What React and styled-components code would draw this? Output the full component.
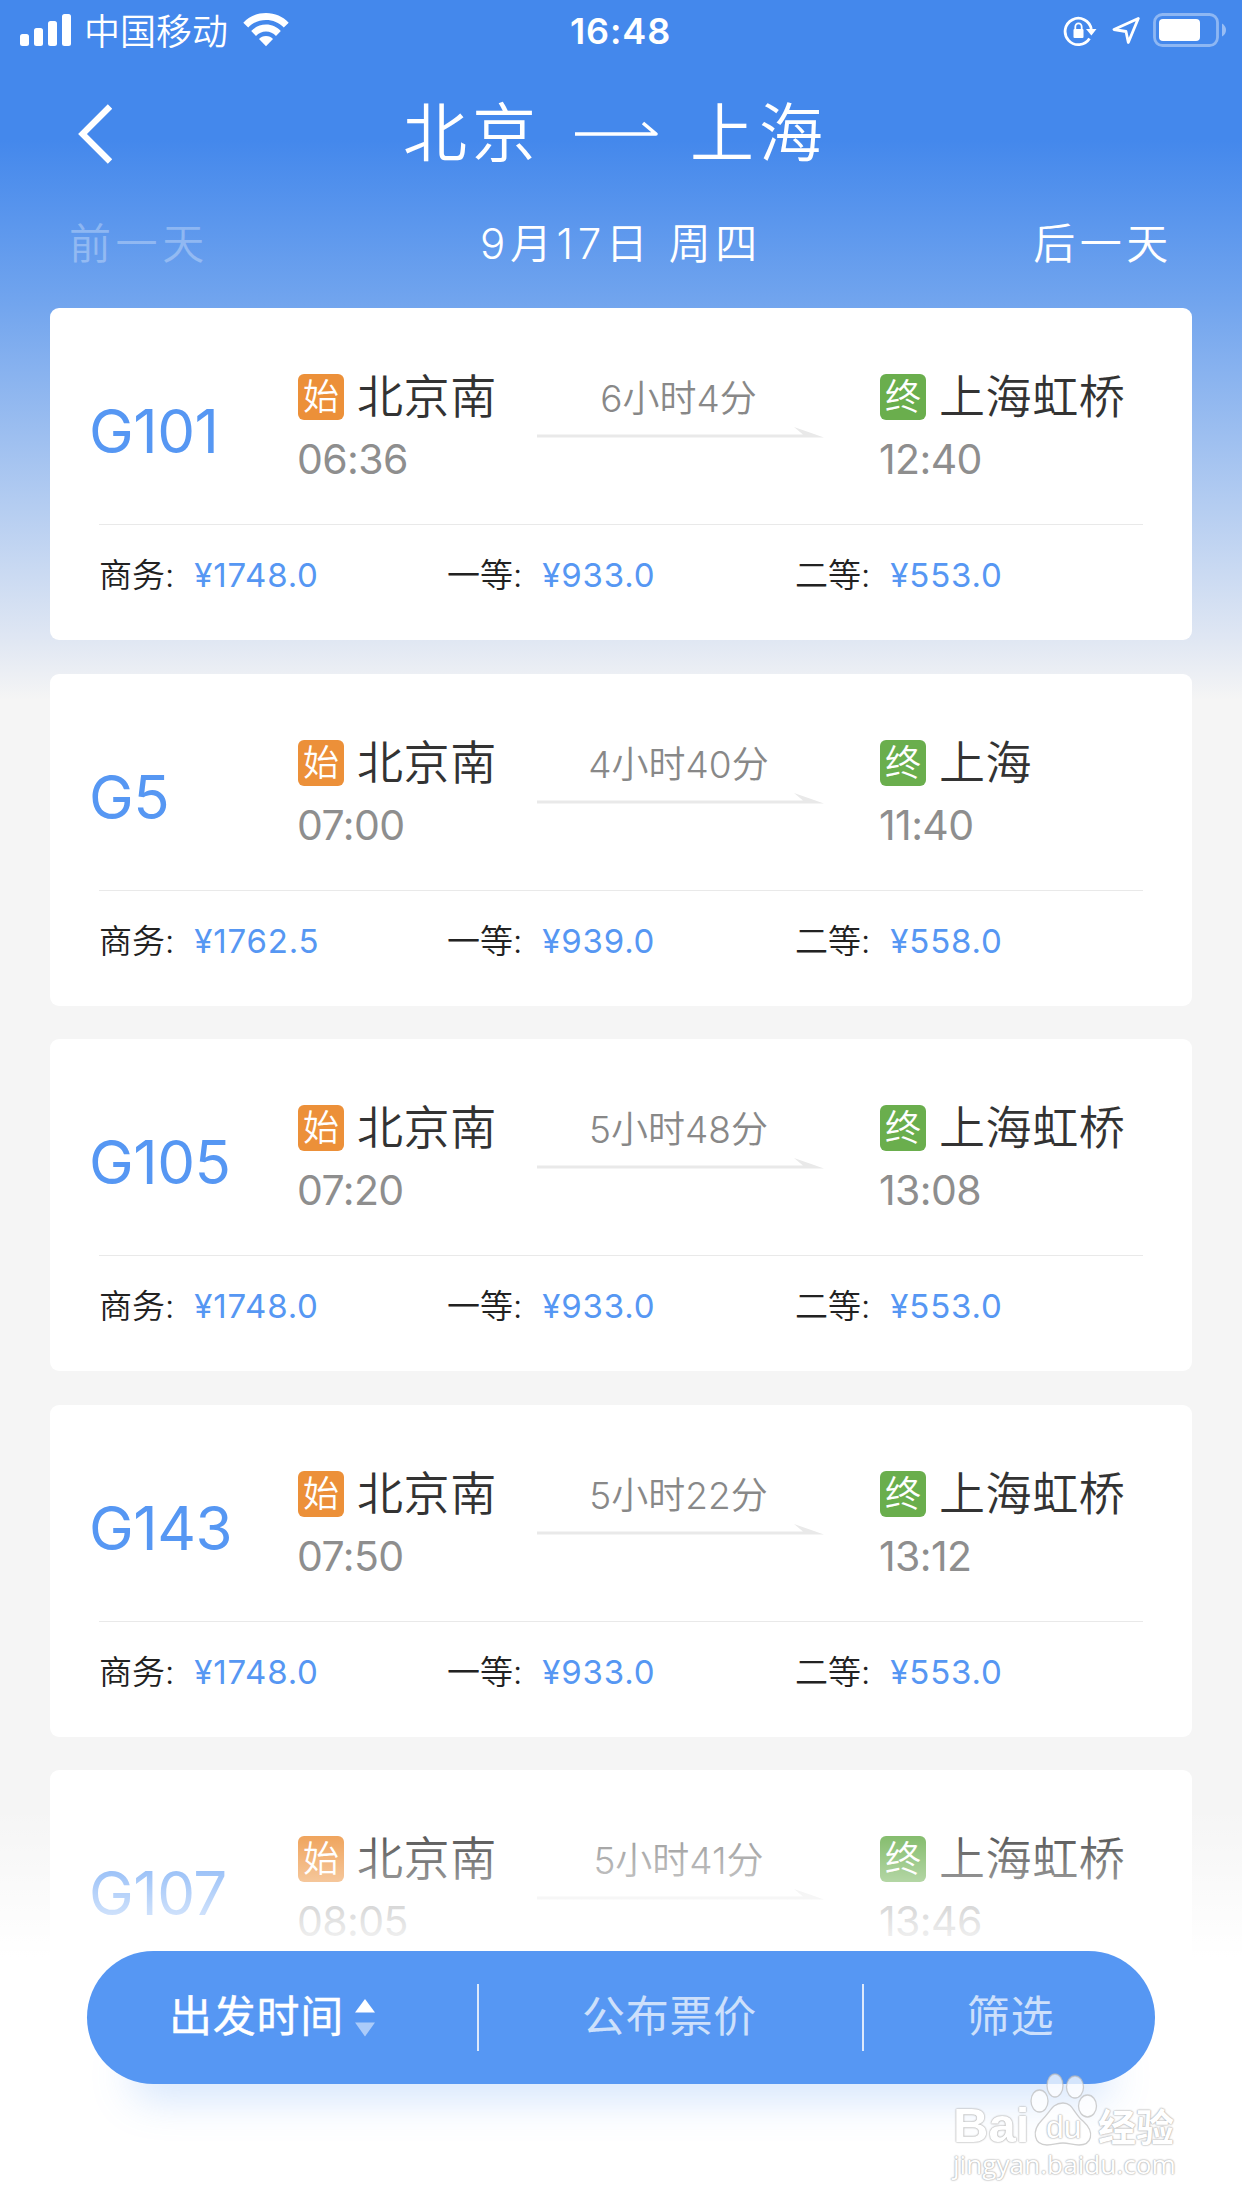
import styled, { createGlobalStyle } from "styled-components";

const trains = [
  {
    no: "G101",
    to: "上海虹桥",
    start: "06:36",
    end: "12:40",
    duration: "6小时4分",
    prices: ["¥1748.0", "¥933.0", "¥553.0"],
  },
  {
    no: "G5",
    to: "上海",
    start: "07:00",
    end: "11:40",
    duration: "4小时40分",
    prices: ["¥1762.5", "¥939.0", "¥558.0"],
  },
  {
    no: "G105",
    to: "上海虹桥",
    start: "07:20",
    end: "13:08",
    duration: "5小时48分",
    prices: ["¥1748.0", "¥933.0", "¥553.0"],
  },
  {
    no: "G143",
    to: "上海虹桥",
    start: "07:50",
    end: "13:12",
    duration: "5小时22分",
    prices: ["¥1748.0", "¥933.0", "¥553.0"],
  },
  {
    no: "G107",
    to: "上海虹桥",
    start: "08:05",
    end: "13:46",
    duration: "5小时41分",
  },
];

const seats = ["商务:", "一等:", "二等:"];

const TrainCard = ({ train }) => (
  <Card>
    <Trip>
      <TrainNo>{train.no}</TrainNo>
      <Stop $width={239}>
        <Station>
          <Badge $color="#ec9039">始</Badge>
          北京南
        </Station>
        <Time>{train.start}</Time>
      </Stop>
      <Duration>
        <p>{train.duration}</p>
        <svg width="288" height="12" viewBox="0 0 288 12">
          <path d="M0 7.5H266L257 0L287 10.6H0Z" fill="#e9e9e9" />
        </svg>
      </Duration>
      <Stop $width={280}>
        <Station>
          <Badge $color="#6aae4d">终</Badge>
          {train.to}
        </Station>
        <Time>{train.end}</Time>
      </Stop>
    </Trip>
    {train.prices && (
      <Prices>
        {seats.map((seat, i) => (
          <Price key={seat}>
            {seat}
            <span>{train.prices[i]}</span>
          </Price>
        ))}
      </Prices>
    )}
  </Card>
);

const App = () => {
  return (
    <Screen>
      <GlobalStyle />
      <StatusBar>
        <StatusSide>
          <svg width="52" height="34" viewBox="0 0 52 34" fill="#fff">
            <rect x="0" y="21" width="9" height="12" rx="2.5" />
            <rect x="14" y="15" width="9" height="18" rx="2.5" />
            <rect x="28" y="8" width="9" height="25" rx="2.5" />
            <rect x="42" y="1" width="9" height="32" rx="2.5" />
          </svg>
          <Carrier>中国移动</Carrier>
          <svg width="46" height="34" viewBox="0 0 46 34" fill="#fff">
            <path d="M23 0C32 0 40 3.5 45.7 9.7L40.8 14.6C36 9.6 29.8 7 23 7S10 9.6 5.2 14.6L.3 9.7C6 3.5 14 0 23 0Z" />
            <path d="M23 11.5C29 11.5 34 14 37.8 18L33 23C30.3 20 27 18.5 23 18.5S15.7 20 13 23L8.2 18C12 14 17 11.5 23 11.5Z" />
            <path d="M23 23C26 23 28.3 24 30 26L23 33.3L16 26C17.7 24 20 23 23 23Z" />
          </svg>
        </StatusSide>
        <Clock>16:48</Clock>
        <StatusSide $end>
          <svg width="34" height="34" viewBox="0 0 34 34">
            <path
              d="M26.5 25.5A13.2 13.2 0 1 1 28.3 16"
              fill="none"
              stroke="#fff"
              strokeWidth="2.8"
            />
            <path d="M23 16H33.5L28.4 22.5Z" fill="#fff" />
            <rect x="10.5" y="16" width="10" height="9" rx="1" fill="#fff" />
            <path
              d="M12.3 17V14A3.2 3.6 0 0 1 18.7 14V17"
              fill="none"
              stroke="#fff"
              strokeWidth="1.8"
            />
          </svg>
          <svg width="30" height="30" viewBox="0 0 30 30">
            <path
              d="M28.3 3.5L4 14.5L16 16.5L18.3 27.5Z"
              fill="none"
              stroke="#fff"
              strokeWidth="2.8"
              strokeLinejoin="round"
            />
          </svg>
          <svg width="74" height="34" viewBox="0 0 74 34">
            <rect
              x="1.5"
              y="1.5"
              width="63"
              height="31"
              rx="8"
              fill="none"
              stroke="#fff"
              strokeOpacity=".4"
              strokeWidth="2.8"
            />
            <rect x="6" y="6" width="41" height="22" rx="4" fill="#fff" />
            <path d="M69 10.5Q73 13 73 17T69 23.5Z" fill="#fff" opacity=".45" />
          </svg>
        </StatusSide>
      </StatusBar>

      <Header>
        <BackButton>
          <svg width="34" height="60" viewBox="0 0 34 60">
            <path
              d="M32 2.5L4.5 30L32 57.5"
              fill="none"
              stroke="#fff"
              strokeWidth="6.2"
            />
          </svg>
        </BackButton>
        <Route>
          <span>北京</span>
          <svg width="84" height="18" viewBox="0 0 84 18">
            <path
              d="M0 14H81L68 3"
              fill="none"
              stroke="#fff"
              strokeWidth="3.6"
              strokeLinejoin="round"
            />
          </svg>
          <span>上海</span>
        </Route>
      </Header>

      <DateBar>
        <DayButton $disabled>前一天</DayButton>
        <DayButton>9月17日 周四</DayButton>
        <DayButton>后一天</DayButton>
      </DateBar>

      <List>
        {trains.map((train) => (
          <TrainCard key={train.no} train={train} />
        ))}
      </List>

      <Fade />
      <FilterBar>
        <Filter $width={390} $active>
          出发时间
          <svg width="20" height="38" viewBox="0 0 20 38" fill="#fff">
            <path d="M0 13.5L10 0L20 13.5Z" />
            <path d="M0 23.5H20L10 37.5Z" opacity=".5" />
          </svg>
        </Filter>
        <Filter $width={385}>公布票价</Filter>
        <Filter $width={297}>筛选</Filter>
      </FilterBar>

      <Watermark>
        <Brand>
          <Latin>Bai</Latin>
          <Paw>
            <svg width="68" height="74" viewBox="0 0 68 74">
              <g
                fill="#fff"
                fillOpacity=".75"
                stroke="#bbb"
                strokeOpacity=".7"
                strokeWidth="1.3"
              >
                <ellipse cx="9.5" cy="28" rx="8.5" ry="11" />
                <ellipse cx="25" cy="12.5" rx="8" ry="11.5" />
                <ellipse cx="45" cy="14" rx="8.5" ry="11" />
                <ellipse cx="57.5" cy="33" rx="9" ry="11" />
                <path d="M33 30C43 30 44 41 53 48C66 60 61 72 49 72C42 72 39 70 33 70S24 72 17 72C4 72 1 58 12 47C20 40 22 30 33 30Z" />
              </g>
            </svg>
            <b>du</b>
          </Paw>
          <Cjk>经验</Cjk>
        </Brand>
        <Site>jingyan.baidu.com</Site>
      </Watermark>
    </Screen>
  );
};

export default App;

const GlobalStyle = createGlobalStyle`
  * {
    box-sizing: border-box;
  }

  body {
    margin: 0;
    font-family: Inter, "Noto Sans CJK SC", sans-serif;
  }

  p {
    margin: 0;
  }

  svg {
    display: block;
    flex-shrink: 0;
  }
`;

const Screen = styled.div`
  position: relative;
  width: 1242px;
  height: 2208px;
  overflow: hidden;
  background: linear-gradient(
    180deg,
    #4488ec 0,
    #4488ec 140px,
    #72a5ee 305px,
    #e0e7f3 640px,
    #f5f5f5 700px
  );
`;

const StatusBar = styled.div`
  display: flex;
  height: 60px;
  padding: 13px 15px 0 20px;
  color: #fff;
`;

const StatusSide = styled.div`
  flex: 1;
  display: flex;
  height: 34px;
  align-items: center;
  justify-content: ${(props) => (props.$end ? "flex-end" : "flex-start")};
  gap: ${(props) => (props.$end ? "13px" : "0")};
`;

const Carrier = styled.span`
  width: 159px;
  margin-left: 12px;
  padding-top: 3px;
  font-size: 36px;
  line-height: 34px;
  font-weight: 350;
`;

const Clock = styled.div`
  margin: 0 3px 0 -3px;
  font-size: 36px;
  line-height: 36px;
  letter-spacing: 0.9px;
  font-weight: 560;
`;

const Header = styled.div`
  display: flex;
  height: 140px;
  align-items: center;
  padding: 8px 79px 0 78px;
`;

const BackButton = styled.div`
  width: 325px;
`;

const Route = styled.div`
  display: flex;
  align-items: center;
  margin-top: -3px;
  font-size: 64px;
  line-height: 80px;
  letter-spacing: 5px;
  font-weight: 350;
  color: #fff;

  svg {
    margin: 0 31px 8px 34px;
  }
`;

const DateBar = styled.div`
  display: flex;
  justify-content: space-between;
  height: 108px;
  padding: 14px 69px 0 69px;
`;

const DayButton = styled.div`
  font-size: 42px;
  line-height: 60px;
  letter-spacing: 4.6px;
  font-weight: 350;
  color: #fff;
  opacity: ${(props) => (props.$disabled ? 0.3 : 1)};
`;

const List = styled.div`
  display: flex;
  flex-direction: column;
  gap: 33.5px;
  padding: 0 50px;
`;

const Card = styled.div`
  height: 332px;
  flex-shrink: 0;
  padding: 0 49px;
  border-radius: 9px;
  background: #fff;
`;

const Trip = styled.div`
  display: flex;
  height: 217px;
  padding-top: 61px;
  border-bottom: 1px solid #e9e9e9;
`;

const TrainNo = styled.div`
  width: 209px;
  flex-shrink: 0;
  margin-left: -10px;
  padding-top: 24px;
  font-size: 60px;
  line-height: 76px;
  letter-spacing: -0.5px;
  color: #5697f3;
`;

const Stop = styled.div`
  width: ${(props) => props.$width}px;
  flex-shrink: 0;
`;

const Station = styled.div`
  display: flex;
  align-items: center;
  height: 56px;
  gap: 13px;
  padding-bottom: 2px;
  font-size: 46px;
  line-height: 50px;
  letter-spacing: 0.6px;
  font-weight: 350;
  white-space: nowrap;
  color: #333;
`;

const Badge = styled.span`
  width: 46px;
  height: 46px;
  margin-top: 2px;
  flex-shrink: 0;
  border-radius: 6px;
  background: ${(props) => props.$color};
  color: #fff;
  font-size: 36px;
  line-height: 46px;
  letter-spacing: 0;
  text-align: center;
`;

const Time = styled.div`
  margin-top: 9px;
  margin-left: -1px;
  font-size: 41px;
  line-height: 50px;
  letter-spacing: -0.6px;
  font-weight: 380;
  color: #8e8e8e;
`;

const Duration = styled.div`
  width: 343px;
  flex-shrink: 0;
  padding-top: 5px;

  p {
    width: 283px;
    height: 53px;
    font-size: 37px;
    line-height: 50px;
    font-weight: 350;
    text-align: center;
    color: #888;
  }
`;

const Prices = styled.div`
  display: flex;
  padding-top: 25px;
`;

const Price = styled.div`
  width: 348px;
  flex-shrink: 0;
  font-size: 33px;
  line-height: 50px;
  font-weight: 350;
  color: #222;

  span {
    margin-left: 20px;
    letter-spacing: 0.8px;
    font-weight: 400;
    color: #5697f3;
  }
`;

const Fade = styled.div`
  position: absolute;
  left: 0;
  right: 0;
  top: 1808px;
  bottom: 0;
  background: linear-gradient(180deg, rgba(255, 255, 255, 0), #fff 150px);
`;

const FilterBar = styled.div`
  position: absolute;
  left: 87px;
  top: 1951px;
  display: flex;
  align-items: center;
  width: 1068px;
  height: 133px;
  border-radius: 67px;
  background: #5697f3;
  box-shadow: 0 58px 42px -44px rgba(86, 151, 243, 0.27);
`;

const Filter = styled.div`
  width: ${(props) => props.$width}px;
  height: 67px;
  flex-shrink: 0;
  display: flex;
  align-items: center;
  justify-content: center;
  gap: 11px;
  padding-right: ${(props) => (props.$active ? 20 : 2)}px;
  padding-bottom: 4px;
  font-size: 43px;
  line-height: 58px;
  letter-spacing: 0.7px;
  color: ${(props) => (props.$active ? "#fff" : "#cde0fb")};
  -webkit-text-stroke: ${(props) => (props.$active ? "0.4px #fff" : "0")};

  svg {
    margin-top: 4px;
  }

  & + & {
    border-left: 2px solid #dde9fb;
  }
`;

const Watermark = styled.div`
  position: absolute;
  left: 953px;
  top: 2075px;
  color: #fff;
  text-shadow:
    0 0 1px #b4b4b4,
    0 0 2px #b4b4b4,
    0 0 2px #c8c8c8;
`;

const Brand = styled.div`
  display: flex;
  height: 72px;
  align-items: flex-end;
`;

const Latin = styled.span`
  width: 77px;
  font: 700 49px/44px "Liberation Sans", sans-serif;
`;

const Paw = styled.span`
  position: relative;

  b {
    position: absolute;
    left: 16px;
    top: 38px;
    font: 400 32px/32px "Liberation Sans", sans-serif;
  }
`;

const Cjk = styled.span`
  font: 700 38px/44px "Noto Sans CJK SC", sans-serif;
`;

const Site = styled.div`
  font: 400 26.2px/34px "Open Sans", sans-serif;
`;
